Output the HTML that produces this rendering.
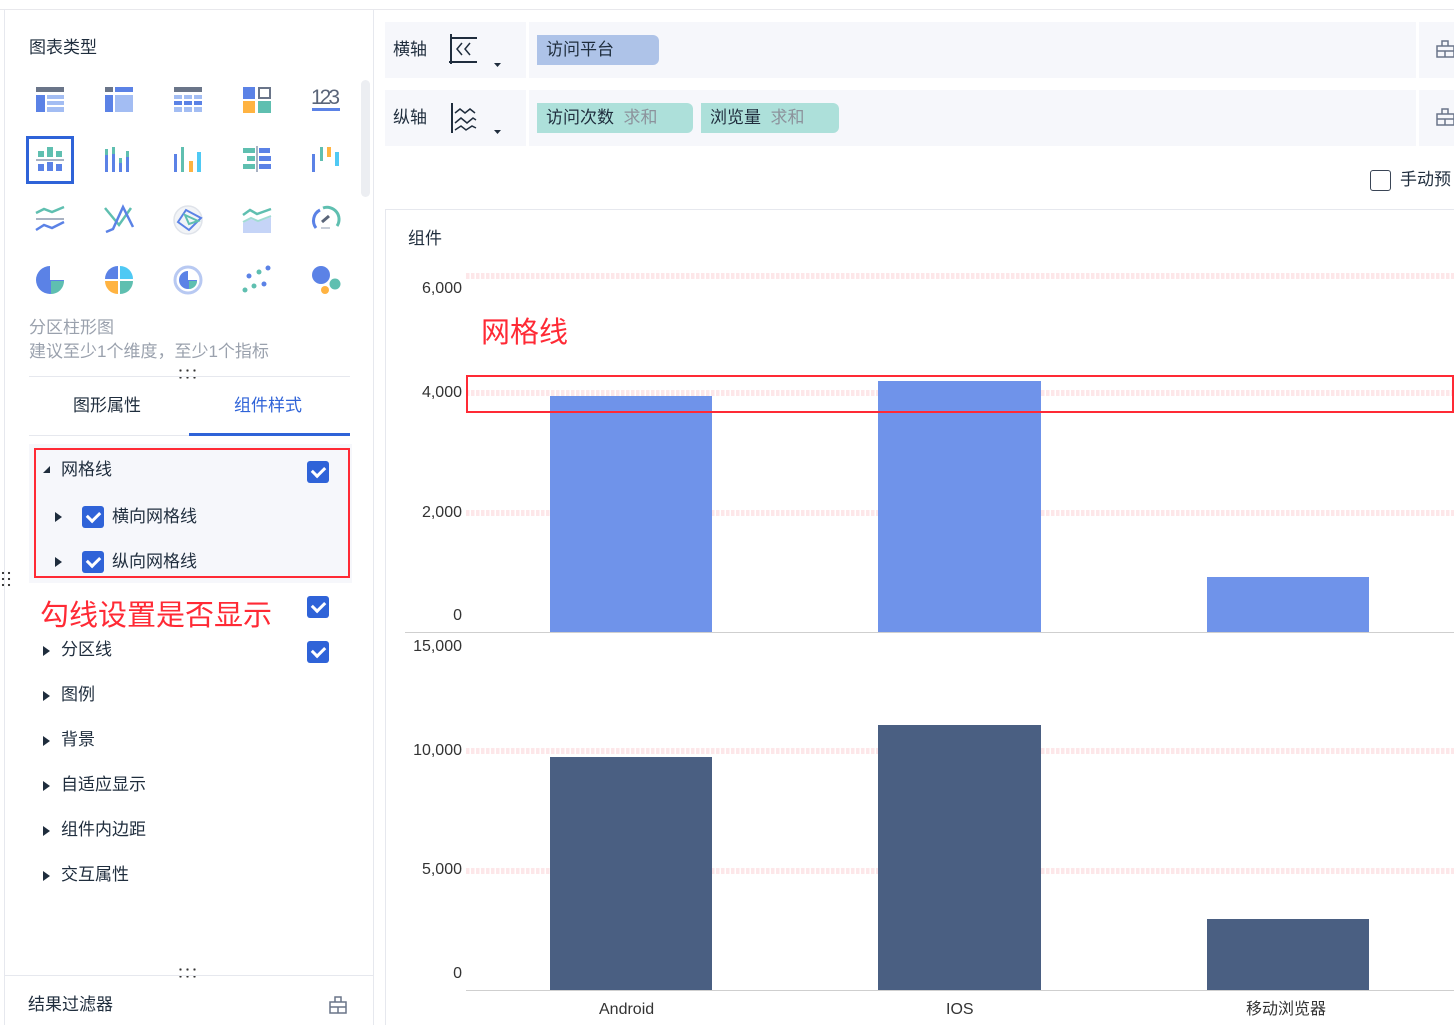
<!DOCTYPE html>
<html><head><meta charset="utf-8">
<style>
*{margin:0;padding:0;box-sizing:border-box}
body{width:1454px;height:1025px;position:relative;overflow:hidden;background:#fff;font-family:"Liberation Sans","Noto Sans CJK SC",sans-serif;color:#1f2d3d;font-size:17px;line-height:20px}
.a{position:absolute;white-space:nowrap}
.cb{position:absolute;width:22px;height:22px;background:#2f63d8;border-radius:3px}
.cb:after{content:"";position:absolute;left:5px;top:5px;width:10px;height:6px;border-left:3px solid #fff;border-bottom:3px solid #fff;transform:rotate(-45deg)}
.tri{position:absolute;width:0;height:0;border-top:5px solid transparent;border-bottom:5px solid transparent;border-left:7px solid #1f2d3d}
.grid{position:absolute;height:6px;background:repeating-linear-gradient(90deg,#fde7e9 0 3.5px,transparent 3.5px 5px)}
.yl{position:absolute;right:992px;color:#333;font-size:16px;text-align:right}
.dots{position:absolute;width:20px;height:14px;background:radial-gradient(circle,#333 1px,transparent 1.3px) 0 0/7px 7px}
</style></head><body>
<div class="a" style="left:0;top:9px;width:1454px;height:1px;background:#e8e8ec"></div>
<div class="a" style="left:4px;top:9px;width:1px;height:1016px;background:#e6e8ee"></div>
<div class="a" style="left:373px;top:9px;width:1px;height:1016px;background:#e6e8ee"></div>
<div class="a" style="left:361px;top:80px;width:9px;height:117px;background:#eceef2;border-radius:5px"></div>
<div class="a" style="left:29px;top:38px;font-size:17px">图表类型</div>

<svg class="a" style="left:0;top:0" width="373" height="320">
<rect x="36" y="87" width="28" height="5" fill="#6a7589"/><rect x="36" y="95" width="9" height="17" fill="#5b82e6"/>
<rect x="47" y="95" width="17" height="4" fill="#a3bdf3"/><rect x="47" y="101" width="17" height="4" fill="#a3bdf3"/><rect x="47" y="107" width="17" height="5" fill="#a3bdf3"/>
<rect x="105" y="87" width="8" height="5" fill="#6a7589"/><rect x="115" y="87" width="18" height="5" fill="#5b82e6"/><rect x="105" y="95" width="8" height="17" fill="#5b82e6"/><rect x="115" y="95" width="18" height="17" fill="#a3bdf3"/>
<rect x="174" y="87" width="28" height="5" fill="#6a7589"/>
<g fill="#a3bdf3"><rect x="174" y="95" width="8" height="4"/><rect x="184" y="95" width="8" height="4"/><rect x="194" y="95" width="8" height="4"/><rect x="174" y="107" width="8" height="5"/><rect x="184" y="107" width="8" height="5"/><rect x="194" y="107" width="8" height="5"/></g>
<g fill="#5b82e6"><rect x="174" y="101" width="8" height="4"/><rect x="184" y="101" width="8" height="4"/><rect x="194" y="101" width="8" height="4"/></g>
<rect x="243" y="87" width="12" height="12" fill="#5b82e6"/><rect x="259" y="88" width="11" height="10" fill="none" stroke="#6a7589" stroke-width="2"/><rect x="243" y="101" width="12" height="12" fill="#ffb341"/><rect x="258" y="101" width="13" height="12" fill="#5fbfb0"/>
<text x="311" y="104" font-size="21" fill="#5a6579" font-family="Liberation Sans" textLength="29">123</text><rect x="312" y="108" width="28" height="3" fill="#5b82e6"/>
<rect x="27.5" y="137.5" width="45" height="45" fill="none" stroke="#2f63d8" stroke-width="3"/>
<rect x="38" y="151" width="6" height="6" fill="#5fbfb0"/><rect x="47" y="147" width="6" height="10" fill="#5fbfb0"/><rect x="56" y="151" width="6" height="6" fill="#5fbfb0"/>
<rect x="36" y="159" width="28" height="2" fill="#a8b2c2"/>
<rect x="38" y="164" width="6" height="7" fill="#5b82e6"/><rect x="47" y="162" width="6" height="9" fill="#5b82e6"/><rect x="56" y="164" width="6" height="7" fill="#5b82e6"/>
<g><rect x="105" y="155" width="3" height="17" fill="#5b82e6"/><rect x="105" y="149" width="3" height="6" fill="#5fbfb0"/><rect x="112" y="154" width="3" height="18" fill="#5b82e6"/><rect x="112" y="147" width="3" height="7" fill="#5fbfb0"/><rect x="119" y="163" width="3" height="9" fill="#5b82e6"/><rect x="119" y="158" width="3" height="5" fill="#5fbfb0"/><rect x="126" y="157" width="3" height="15" fill="#5b82e6"/><rect x="126" y="151" width="3" height="6" fill="#5fbfb0"/></g>
<rect x="174" y="154" width="3" height="18" fill="#5b82e6"/><rect x="181" y="147" width="3" height="25" fill="#5fbfb0"/><rect x="189" y="161" width="4" height="11" fill="#ffb341"/><rect x="197" y="152" width="4" height="20" fill="#4fc9f4"/>
<rect x="243" y="148" width="12" height="5" fill="#5fbfb0"/><rect x="259" y="148" width="11" height="5" fill="#5b82e6"/><rect x="247" y="156" width="8" height="5" fill="#5fbfb0"/><rect x="259" y="156" width="12" height="5" fill="#5b82e6"/><rect x="243" y="164" width="12" height="5" fill="#5fbfb0"/><rect x="259" y="164" width="12" height="5" fill="#5b82e6"/><rect x="256" y="146" width="2" height="26" fill="#a8b2c2"/>
<rect x="312" y="154" width="3" height="18" fill="#5b82e6"/><rect x="320" y="147" width="3" height="14" fill="#5fbfb0"/><rect x="327" y="147" width="4" height="10" fill="#ffb341"/><rect x="335" y="152" width="4" height="14" fill="#4fc9f4"/>
<path d="M36 213 l8-4 8 3 12-5" fill="none" stroke="#5fbfb0" stroke-width="2.5"/><rect x="36" y="218" width="28" height="2" fill="#a8b2c2"/><path d="M36 230 l8-5 8 3 12-6" fill="none" stroke="#5b82e6" stroke-width="2.5"/>
<path d="M105 208 l14 17 12-17" fill="none" stroke="#5fbfb0" stroke-width="2.5"/><path d="M106 232 l7-3 10-22 10 20" fill="none" stroke="#5b82e6" stroke-width="2.5"/>
<circle cx="188" cy="220" r="14" fill="#f2f4f7" stroke="#dfe3ea" stroke-width="1.5"/><path d="M178 222 l8-12 15 8-12 12z" fill="none" stroke="#5b82e6" stroke-width="2"/><path d="M185 215 l13 6-9 3z" fill="none" stroke="#5fbfb0" stroke-width="2"/>
<path d="M243 233 v-10 l8-4 7 3 13-5 v16z" fill="#c5d4f7"/><path d="M243 215 l7-5 7 4 14-5" fill="none" stroke="#5fbfb0" stroke-width="2.5"/><path d="M243 222 l8-4 7 3 13-5" fill="none" stroke="#a0dcd3" stroke-width="2"/>
<path d="M316 228 a12 12 0 0 1 4-18" fill="none" stroke="#5b82e6" stroke-width="3"/><path d="M323 208 a12 12 0 0 1 14 18" fill="none" stroke="#5fbfb0" stroke-width="3"/><path d="M322 222 l7-6" stroke="#5a6579" stroke-width="3"/><rect x="321" y="227" width="9" height="2" fill="#c8ced8"/>
<path d="M50 266 a14 14 0 1 0 14 14 h-14z" fill="#5b82e6"/><path d="M51 281 h13 a13 13 0 0 1 -13 13z" fill="#5fbfb0"/>
<path d="M118 266 v13 h-13 a13 13 0 0 1 13-13z" fill="#5b82e6"/><path d="M120 266 a13 13 0 0 1 13 13 h-13z" fill="#4fc9f4"/><path d="M105 281 h13 v13 a13 13 0 0 1 -13-13z" fill="#ffb341"/><path d="M120 281 h13 a13 13 0 0 1 -13 13z" fill="#5fbfb0"/>
<circle cx="188" cy="280" r="13" fill="none" stroke="#b8c9f2" stroke-width="3"/><path d="M188 271 a9 9 0 1 0 9 9 h-9z" fill="#5b82e6"/><path d="M189 281 h8 a8 8 0 0 1 -8 8z" fill="#5fbfb0"/>
<g fill="#5b82e6"><circle cx="249" cy="276" r="2.5"/><circle cx="268" cy="268" r="2.5"/><circle cx="264" cy="284" r="2.5"/></g><g fill="#5fbfb0"><circle cx="245" cy="290" r="2.5"/><circle cx="254" cy="286" r="2.5"/><circle cx="259" cy="272" r="2.5"/></g>
<circle cx="321" cy="275" r="9" fill="#5b82e6"/><circle cx="335" cy="284" r="5.5" fill="#5fbfb0"/><circle cx="325" cy="290" r="4" fill="#ffb341"/>
</svg>

<div class="a" style="left:29px;top:318px;color:#9aa1ad;font-size:17px">分区柱形图</div>
<div class="a" style="left:29px;top:342px;color:#9aa1ad;font-size:17px">建议至少1个维度，至少1个指标</div>
<div class="dots" style="left:177px;top:367px"></div>
<div class="a" style="left:29px;top:376px;width:321px;height:1px;background:#e6e8ee"></div>
<div class="a" style="left:73px;top:396px">图形属性</div>
<div class="a" style="left:234px;top:396px;color:#2f63d8">组件样式</div>
<div class="a" style="left:29px;top:435px;width:321px;height:1px;background:#e6e8ee"></div>
<div class="a" style="left:189px;top:433px;width:161px;height:3px;background:#2f63d8"></div>

<div class="a" style="left:29px;top:444px;width:323px;height:139px;background:#f6f7fb"></div>
<div class="a" style="left:34px;top:448px;width:316px;height:130px;border:2px solid #ff2a35"></div>
<div class="a" style="left:43px;top:466px;width:0;height:0;border-left:7px solid transparent;border-bottom:7px solid #1f2d3d"></div>
<div class="a" style="left:61px;top:460px">网格线</div>
<div class="cb" style="left:307px;top:461px"></div>
<div class="tri" style="left:55px;top:512px"></div>
<div class="cb" style="left:82px;top:506px"></div>
<div class="a" style="left:112px;top:507px">横向网格线</div>
<div class="tri" style="left:55px;top:557px"></div>
<div class="cb" style="left:82px;top:551px"></div>
<div class="a" style="left:112px;top:552px">纵向网格线</div>
<div class="dots" style="left:0;top:570px;width:12px;height:20px;background-size:6px 6px"></div>

<div class="a" style="left:40px;top:600px;font-size:29px;line-height:32px;color:#ff2a35">勾线设置是否显示</div>
<div class="cb" style="left:307px;top:596px"></div>
<div class="tri" style="left:43px;top:646px"></div>
<div class="a" style="left:61px;top:640px">分区线</div>
<div class="cb" style="left:307px;top:641px"></div>
<div class="tri" style="left:43px;top:691px"></div><div class="a" style="left:61px;top:685px">图例</div>
<div class="tri" style="left:43px;top:736px"></div><div class="a" style="left:61px;top:730px">背景</div>
<div class="tri" style="left:43px;top:781px"></div><div class="a" style="left:61px;top:775px">自适应显示</div>
<div class="tri" style="left:43px;top:826px"></div><div class="a" style="left:61px;top:820px">组件内边距</div>
<div class="tri" style="left:43px;top:871px"></div><div class="a" style="left:61px;top:865px">交互属性</div>

<div class="dots" style="left:177px;top:966px"></div>
<div class="a" style="left:5px;top:975px;width:368px;height:1px;background:#e6e8ee"></div>
<div class="a" style="left:28px;top:995px">结果过滤器</div>
<svg class="a" style="left:329px;top:996px" width="18" height="18"><path d="M1 6h16v11H1z M6 6V1h6v5 M1 11h16 M9 11v6" fill="none" stroke="#6a7589" stroke-width="1.5"/></svg>

<div class="a" style="left:385px;top:22px;width:1069px;height:56px;background:#f6f7fb"></div>
<div class="a" style="left:526px;top:22px;width:3px;height:56px;background:#fff"></div>
<div class="a" style="left:1416px;top:22px;width:3px;height:56px;background:#fff"></div>
<div class="a" style="left:385px;top:90px;width:1069px;height:56px;background:#f6f7fb"></div>
<div class="a" style="left:526px;top:90px;width:3px;height:56px;background:#fff"></div>
<div class="a" style="left:1416px;top:90px;width:3px;height:56px;background:#fff"></div>
<div class="a" style="left:393px;top:40px">横轴</div>
<div class="a" style="left:393px;top:108px">纵轴</div>
<svg class="a" style="left:448px;top:33px" width="60" height="40"><path d="M3 1v30 M1 29h28 M3 5h26" fill="none" stroke="#1f2d3d" stroke-width="2"/><path d="M14 10l-5 6 5 6 M22 10l-5 6 5 6" fill="none" stroke="#1f2d3d" stroke-width="1.5"/><path d="M46 30h7l-3.5 4z" fill="#1f2d3d"/></svg>
<svg class="a" style="left:448px;top:102px" width="60" height="40"><path d="M4 1v30" stroke="#1f2d3d" stroke-width="2"/><path d="M7 11l5-4 5 4 5-4 5 4 M7 21l6-5 6 5 6-5 3 2 M7 28l6-4 5 4 6-4 4 2" fill="none" stroke="#1f2d3d" stroke-width="1.5"/><path d="M46 28h7l-3.5 4z" fill="#1f2d3d"/></svg>
<div class="a" style="left:537px;top:35px;width:122px;height:30px;background:#aec3e8;border-radius:0 6px 6px 0"></div>
<div class="a" style="left:546px;top:40px">访问平台</div>
<div class="a" style="left:537px;top:103px;width:156px;height:30px;background:#ade0da;border-radius:0 6px 6px 0"></div>
<div class="a" style="left:546px;top:108px">访问次数 <span style="color:#8c929c">&nbsp;求和</span></div>
<div class="a" style="left:701px;top:103px;width:138px;height:30px;background:#ade0da;border-radius:0 6px 6px 0"></div>
<div class="a" style="left:710px;top:108px">浏览量 <span style="color:#8c929c">&nbsp;求和</span></div>
<svg class="a" style="left:1436px;top:40px" width="18" height="18"><path d="M1 6h17v11H1z M6 6V1h6v5 M1 11h17 M9 11v6" fill="none" stroke="#6a7589" stroke-width="1.5"/></svg>
<svg class="a" style="left:1436px;top:108px" width="18" height="18"><path d="M1 6h17v11H1z M6 6V1h6v5 M1 11h17 M9 11v6" fill="none" stroke="#6a7589" stroke-width="1.5"/></svg>
<div class="a" style="left:1370px;top:170px;width:21px;height:21px;border:1.5px solid #3a4556;border-radius:3px"></div>
<div class="a" style="left:1400px;top:170px">手动预</div>

<div class="a" style="left:385px;top:209px;width:1069px;height:1px;background:#e6e8ee"></div>
<div class="a" style="left:385px;top:209px;width:1px;height:816px;background:#e6e8ee"></div>
<div class="a" style="left:408px;top:229px">组件</div>

<div class="grid" style="left:466px;top:273px;width:988px"></div>
<div class="grid" style="left:466px;top:390px;width:988px"></div>
<div class="grid" style="left:466px;top:510px;width:988px"></div>
<div class="yl" style="top:279px">6,000</div>
<div class="yl" style="top:383px">4,000</div>
<div class="yl" style="top:503px">2,000</div>
<div class="yl" style="top:606px">0</div>
<div class="a" style="left:550px;top:396px;width:162px;height:236px;background:#6f93ea"></div>
<div class="a" style="left:878px;top:381px;width:163px;height:251px;background:#6f93ea"></div>
<div class="a" style="left:1207px;top:577px;width:162px;height:55px;background:#6f93ea"></div>
<div class="a" style="left:405px;top:632px;width:1049px;height:1px;background:#cfcfcf"></div>
<div class="a" style="left:466px;top:375px;width:988px;height:38px;border:2px solid #ff2a35"></div>
<div class="a" style="left:481px;top:317px;font-size:29px;line-height:32px;color:#ff2a35">网格线</div>

<div class="grid" style="left:466px;top:748px;width:988px"></div>
<div class="grid" style="left:466px;top:868px;width:988px"></div>
<div class="yl" style="top:637px">15,000</div>
<div class="yl" style="top:741px">10,000</div>
<div class="yl" style="top:860px">5,000</div>
<div class="yl" style="top:964px">0</div>
<div class="a" style="left:550px;top:757px;width:162px;height:233px;background:#4a5f82"></div>
<div class="a" style="left:878px;top:725px;width:163px;height:265px;background:#4a5f82"></div>
<div class="a" style="left:1207px;top:919px;width:162px;height:71px;background:#4a5f82"></div>
<div class="a" style="left:466px;top:990px;width:988px;height:1px;background:#cfcfcf"></div>
<div class="a" style="left:599px;top:1000px;color:#333;font-size:16px">Android</div>
<div class="a" style="left:946px;top:1000px;color:#333;font-size:16px">IOS</div>
<div class="a" style="left:1246px;top:1000px;color:#333;font-size:16px">移动浏览器</div>
</body></html>
